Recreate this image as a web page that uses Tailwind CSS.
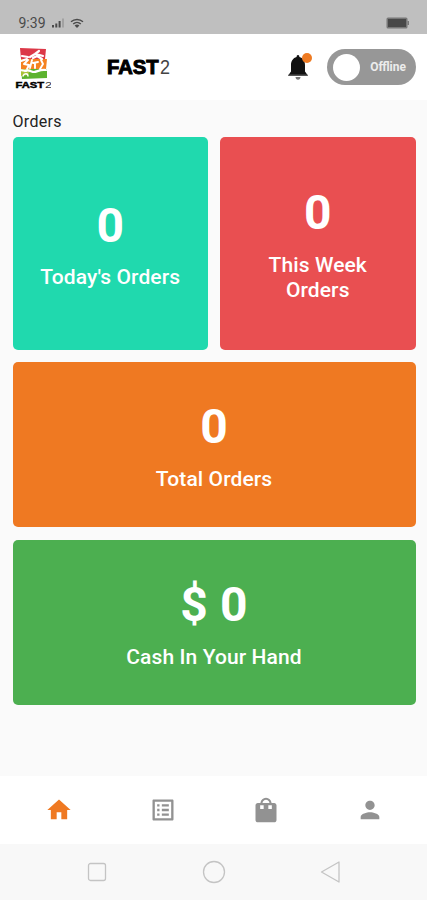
<!DOCTYPE html>
<html lang="en">
<head>
  <meta charset="UTF-8" />
  <meta name="viewport" content="width=device-width, initial-scale=1.0" />
  <title>FAST2 Driver</title>
  <script src="https://cdn.jsdelivr.net/npm/@tailwindcss/browser@4"></script>
</head>
<body class="bg-[#fafafa] font-[Roboto,sans-serif] overflow-hidden">
  <div class="w-full h-[900px] flex flex-col">

    <!-- Status bar -->
    <div class="h-[34px] shrink-0 bg-[#bfbfbf] flex items-end justify-between pl-[18.5px] pr-[18px] pb-[3px] text-[#4a4a4a]">
      <div class="flex items-center h-4">
        <span class="text-[14px] leading-4 w-[33px]">9:39</span>
        <svg class="w-[13px] h-[10px]" viewBox="0 0 13 10" fill="currentColor">
          <path d="M0 7h2v2.500H0zM3.300 5.500h2v4h-2zM6.600 3h2v6.500h-2z" />
          <path d="M10 .5h2v9h-2z" opacity=".25" />
        </svg>
        <svg class="w-[14px] h-[11px] ml-[5px]" viewBox="0 0 14 11" fill="none" stroke="currentColor" stroke-width="1.4">
          <path d="M1 3.8C4.4.7 9.6.7 13 3.8M3.2 6c2.2-2 5.4-2 7.6 0" />
          <path d="M4.6 7.4c1.4-1.200 3.4-1.200 4.8 0L7 10z" fill="currentColor" stroke="none" />
        </svg>
      </div>
      <svg class="w-[23px] h-[12px] mb-[2px]" viewBox="0 0 23 12">
        <rect x="0.5" y="0.5" width="21" height="11" rx="1.5" fill="#777" />
        <rect x="2" y="2" width="18" height="8" fill="#484848" />
        <rect x="21.5" y="4" width="1.5" height="4" fill="#777" />
      </svg>
    </div>

    <!-- Header -->
    <header class="h-[66px] shrink-0 bg-white flex items-center pl-[15px] pr-[11px]">
      <svg class="w-9 h-[43px]" viewBox="0 0 36 43">
        <path d="M5 2l26 1-1 10H6z" fill="#dc3848" />
        <path d="M6 13h26l-1 10H6z" fill="#f58220" />
        <path d="M6 23h26v9L7 33z" fill="#5cb32e" />
        <path d="M6 23h10l-3 6-7 1z" fill="#a9c238" />
        <g fill="none" stroke="#fff" stroke-linecap="round" stroke-linejoin="round">
          <path d="M7 10l6 1M15 11l5-3 4-3M21 8l7 2M18 12l4-2 5 3" stroke-width="2.200" />
          <path d="M6 15l6-2M13 14l-4 4 5 1-2 4M17 14l-2 8M18 17l5-1M20 18v4M26 14l2 4-3 5" stroke-width="1.900" />
          <path d="M5 24l6 1M10 25c4-2 6 1 9 1s6-3 12-2" stroke-width="2.200" />
          <path d="M8 30c1-3 5-3 5 0" stroke-width="1.400" />
        </g>
        <text x="0.500" y="42" textLength="28.500" lengthAdjust="spacingAndGlyphs" font-family="Liberation Sans" font-weight="700" font-size="9.500" stroke="#000" stroke-width=".5">FAST</text>
        <text x="30" y="42" textLength="7" lengthAdjust="spacingAndGlyphs" font-family="Liberation Sans" font-size="9.500" fill="#333">2</text>
      </svg>
      <svg class="ml-[55px] w-[65px] h-[24px]" viewBox="0 0 65 24">
        <text x="1" y="18.500" textLength="51.500" lengthAdjust="spacingAndGlyphs" font-family="Liberation Sans" font-weight="700" font-size="19.500" stroke="#000" stroke-width="1">FAST</text>
        <text x="54" y="19" textLength="10" lengthAdjust="spacingAndGlyphs" font-family="Liberation Sans" font-size="20" fill="#444">2</text>
      </svg>
      <div class="ml-auto relative w-[20px] h-[26px] mr-[19px]">
        <svg class="w-[20px] h-[25px] mt-px" viewBox="0 0 20 25">
          <path d="M10 0C9 0 8.600 .8 8.600 2 5 3 3 6 3 10v6.500L.5 20v1h19v-1L17 16.500V10c0-4-2-7-5.600-8C11.400.8 11 0 10 0z" fill="#111" />
          <path d="M.5 19.500h19V21H.5z" fill="#555" />
          <path d="M7.500 22h5c0 1.600-1 2.700-2.500 2.700S7.500 23.600 7.500 22z" fill="#777" />
        </svg>
        <span class="absolute left-[14px] -top-[1px] size-[10px] rounded-full bg-[#ee7a22]"></span>
      </div>
      <button class="w-[89px] h-[36px] rounded-full bg-[#979797] flex items-center justify-between pl-[6px] pr-[10px]">
        <span class="size-[27px] rounded-full bg-white"></span>
        <span class="text-[12px] font-bold text-[#ececec]">Offline</span>
      </button>
    </header>

    <!-- Orders -->
    <main class="flex-1 pl-[12.5px] pr-[11.5px] pt-3">
      <h2 class="h-[25px] text-[16px] leading-[19px] tracking-[.3px] text-[#222]">Orders</h2>
      <div class="grid grid-cols-2 gap-3 text-white text-center tracking-[.1px]">
        <div class="h-[213px] rounded-[5px] bg-[#20d9ae] flex flex-col items-center justify-center">
          <div class="text-[48px] leading-[58px] font-bold">0</div>
          <div class="mt-[10px] text-[21px] leading-[25px] font-medium">Today's Orders</div>
        </div>
        <div class="h-[213px] rounded-[5px] bg-[#e94f51] flex flex-col items-center justify-center">
          <div class="text-[48px] leading-[58px] font-bold">0</div>
          <div class="mt-[11px] text-[21px] leading-[25px] font-medium">This Week<br />Orders</div>
        </div>
        <div class="col-span-2 h-[165px] rounded-[5px] bg-[#ef7922] flex flex-col items-center justify-center">
          <div class="text-[48px] leading-[58px] font-bold">0</div>
          <div class="mt-[11px] text-[21px] leading-[25px] font-medium">Total Orders</div>
        </div>
        <div class="col-span-2 h-[165px] mt-[1px] rounded-[5px] bg-[#4caf50] flex flex-col items-center justify-center">
          <div class="text-[48px] leading-[58px] font-bold">$ 0</div>
          <div class="mt-[11px] text-[21px] leading-[25px] font-medium">Cash In Your Hand</div>
        </div>
      </div>
    </main>

    <!-- Bottom tabs -->
    <nav class="h-[68px] shrink-0 bg-white grid grid-cols-4 items-center justify-items-center pl-[7px] pr-[5px] pb-px text-[#929292]">
      <svg class="size-[28px]" viewBox="0 0 24 24" fill="#ef7922"><path d="M10 20v-6h4v6h5v-8h3L12 3 2 12h3v8z" /></svg>
      <svg class="size-[28px]" viewBox="0 0 24 24" fill="currentColor"><path d="M19 5v14H5V5h14m1.100-2H3.900c-.5 0-.9.400-.9.900v16.200c0 .4.400.9.900.9h16.200c.4 0 .9-.5.900-.9V3.900c0-.5-.5-.9-.9-.9zM11 7h6v2h-6V7zm0 4h6v2h-6v-2zm0 4h6v2h-6zM7 7h2v2H7zm0 4h2v2H7zm0 4h2v2H7z" /></svg>
      <svg class="size-[28px]" viewBox="0 0 24 24" fill="currentColor"><path fill-rule="evenodd" d="M19 6h-2.200C16.400 3.300 14.500 1.500 12 1.500S7.600 3.300 7.200 6H5c-1.100 0-2 .9-2 2v12.500c0 1.100.9 2 2 2h14c1.100 0 2-.9 2-2V8c0-1.100-.9-2-2-2zm-7-2.700c1.600 0 2.600 1.100 3 2.700H9c.4-1.600 1.400-2.700 3-2.700zM7 8h3v3.200H7zM14 8h3v3.200h-3z" /></svg>
      <svg class="size-[28px]" viewBox="0 0 24 24" fill="currentColor"><path d="M12 12c2.210 0 4-1.790 4-4s-1.790-4-4-4-4 1.790-4 4 1.790 4 4 4zm0 2c-2.670 0-8 1.340-8 4v2h16v-2c0-2.660-5.330-4-8-4z" /></svg>
    </nav>

    <!-- System navigation -->
    <div class="h-[56px] shrink-0 bg-[#f8f8f8] flex items-center justify-center gap-[94px]">
      <svg class="w-[22px] h-[22px]" viewBox="0 0 22 22" fill="none" stroke="#c4c4c4" stroke-width="1.300"><rect x="2.500" y="2.500" width="17" height="17" rx="2" /></svg>
      <svg class="w-[24px] h-[24px]" viewBox="0 0 24 24" fill="none" stroke="#c4c4c4" stroke-width="1.300"><circle cx="12" cy="12" r="10.500" /></svg>
      <svg class="w-[22px] h-[24px]" viewBox="0 0 22 24" fill="none" stroke="#c4c4c4" stroke-width="1.300" stroke-linejoin="round"><path d="M1.500 12L19 2v20z" /></svg>
    </div>
  </div>
</body>
</html>
